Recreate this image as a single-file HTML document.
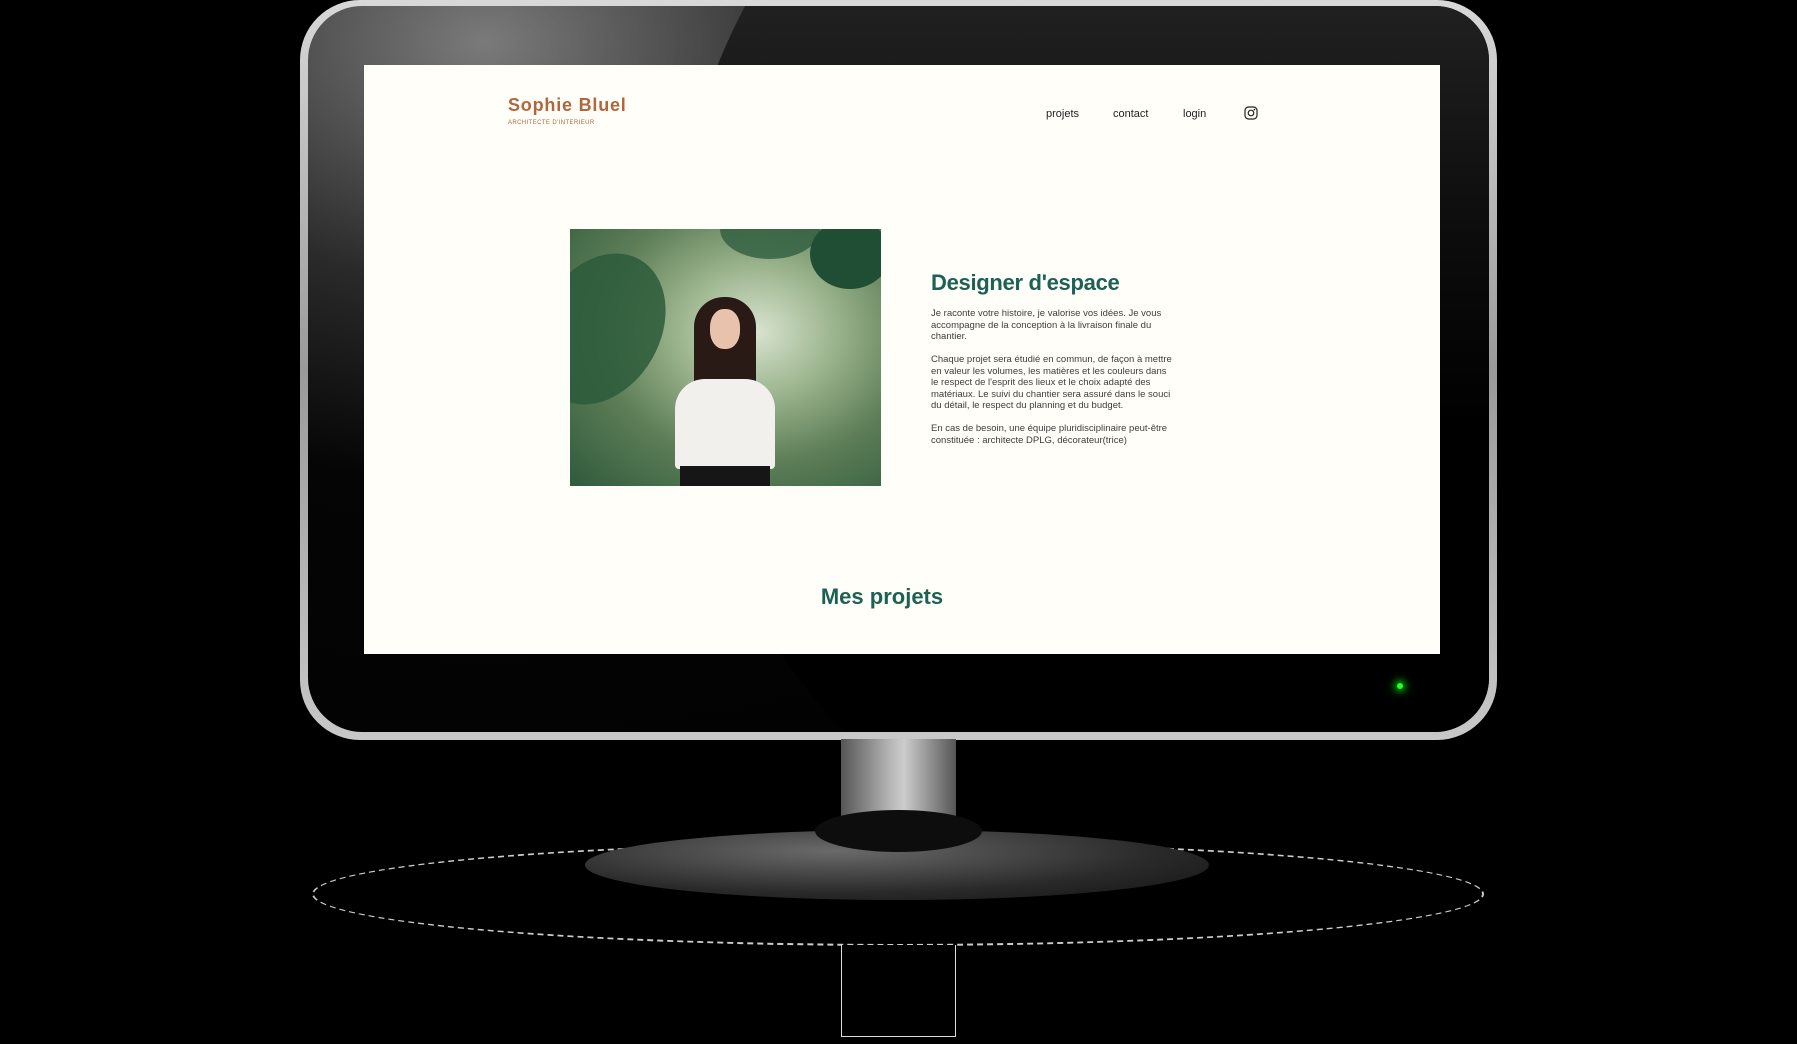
<!DOCTYPE html>
<html><head><meta charset="utf-8"><style>
*{margin:0;padding:0;box-sizing:border-box}
html,body{width:1797px;height:1044px;overflow:hidden}
body{background:#000;position:relative;font-family:"Liberation Sans",sans-serif}
.abs{position:absolute}
.rim{left:300px;top:0;width:1197px;height:740px;border-radius:60px;background:linear-gradient(#d8d8d8,#9a9a9a 50%,#c8c8c8);}
.bezel{left:308px;top:6px;width:1181px;height:726px;border-radius:54px;overflow:hidden;background:radial-gradient(ellipse at 15% 5%,#7a7a7a 0,#2a2a2a 25%,#050505 45%,#000 100%);}
.gloss{left:364px;top:-334px;width:1256px;height:1256px;border-radius:50%;background:linear-gradient(#222 25%,#0c0c0c 45%,#000 60%)}
.screen{left:364px;top:65px;width:1076px;height:589px;background:#fffef8}
.logo{left:144px;top:30px;color:#b1663c;font-weight:bold;font-size:18px;letter-spacing:.8px}
.sub{left:144px;top:55px;color:#b1663c;font-size:6px;letter-spacing:.4px}
.nav{top:43px;font-size:11px;color:#222}
.photo{left:206px;top:164px;width:311px;height:257px;overflow:hidden;background:radial-gradient(ellipse at 60% 40%,#d8e3cf 0,#9bb48d 30%,#5d7e57 60%,#2f5a3c 100%)}
h2{position:absolute;left:567px;top:205px;font-size:22px;color:#1d6154;font-weight:bold;letter-spacing:-.3px}
.txt{left:567px;top:243px;width:245px;font-size:9.5px;line-height:11.5px;color:#3d3d3d}
.txt p{margin-bottom:11.5px}
.mp{width:1076px;text-align:center;top:519px;font-size:22px;color:#1d6154;font-weight:bold}
</style></head><body>
<div class="abs rim"></div>
<div class="abs bezel"><div class="abs gloss"></div></div>
<div class="abs screen">
 <div class="abs logo">Sophie Bluel</div>
 <div class="abs sub">ARCHITECTE D'INTERIEUR</div>
 <div class="abs nav" style="left:682px">projets</div>
 <div class="abs nav" style="left:749px">contact</div>
 <div class="abs nav" style="left:819px">login</div>
 <svg class="abs" style="left:880px;top:41px" width="14" height="14" viewBox="0 0 14 14"><rect x="1" y="1" width="12" height="12" rx="3.5" fill="none" stroke="#222" stroke-width="1.2"/><circle cx="7" cy="7" r="2.8" fill="none" stroke="#222" stroke-width="1.2"/><circle cx="10.4" cy="3.6" r=".8" fill="#222"/></svg>
 <div class="abs photo">
  <div class="abs" style="left:-30px;top:20px;width:120px;height:160px;border-radius:50%;background:#2c5a3a;opacity:.85;transform:rotate(30deg)"></div>
  <div class="abs" style="left:150px;top:-30px;width:100px;height:60px;border-radius:50%;background:#2e5e40;opacity:.8"></div>
  <div class="abs" style="left:240px;top:-10px;width:80px;height:70px;border-radius:50%;background:#1f4e35"></div>
  <div class="abs" style="left:124px;top:68px;width:62px;height:120px;border-radius:30px 30px 8px 8px;background:#2a1a16"></div>
  <div class="abs" style="left:140px;top:80px;width:30px;height:40px;border-radius:45%;background:#e8c2ac"></div>
  <div class="abs" style="left:105px;top:150px;width:100px;height:90px;border-radius:30px 30px 4px 4px;background:#f2f0ec"></div>
  <div class="abs" style="left:110px;top:237px;width:90px;height:20px;background:#161616"></div>
 </div>
 <h2>Designer d'espace</h2>
 <div class="abs txt"><p>Je raconte votre histoire, je valorise vos idées. Je vous accompagne de la conception à la livraison finale du chantier.</p><p>Chaque projet sera étudié en commun, de façon à mettre en valeur les volumes, les matières et les couleurs dans le respect de l'esprit des lieux et le choix adapté des matériaux. Le suivi du chantier sera assuré dans le souci du détail, le respect du planning et du budget.</p><p>En cas de besoin, une équipe pluridisciplinaire peut-être constituée : architecte DPLG, décorateur(trice)</p></div>
 <div class="abs mp" style="left:-20px">Mes projets</div>
</div>
<div class="abs" style="left:1397px;top:683px;width:6px;height:6px;border-radius:50%;background:#2f2;box-shadow:0 0 8px 3px #0a0"></div>
<div class="abs" style="left:312px;top:842px;width:1172px;height:104px;border-radius:50%;border:2px dashed #ccc"></div>
<div class="abs" style="left:585px;top:830px;width:624px;height:70px;border-radius:50%;background:radial-gradient(ellipse at 40% 30%,#6a6a6a,#2a2a2a 60%,#111 100%)"></div>
<div class="abs" style="left:841px;top:739px;width:115px;height:105px;border-radius:0 0 40px 40px/0 0 20px 20px;background:linear-gradient(90deg,#555,#bbb 45%,#ccc 55%,#555);"></div>
<div class="abs" style="left:815px;top:810px;width:167px;height:42px;border-radius:50%;background:#0d0d0d"></div>
<div class="abs" style="left:841px;top:945px;width:115px;height:92px;border:1px solid #ddd;border-top:none;background:#000"></div>
</body></html>
